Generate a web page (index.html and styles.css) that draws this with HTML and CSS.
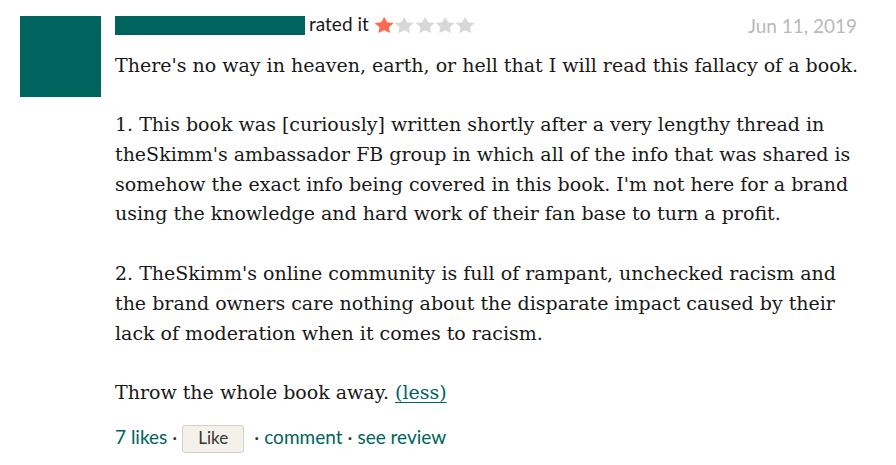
FILE: index.html
```html
<!DOCTYPE html>
<html lang="en">
<head>
<meta charset="utf-8">
<title>Review</title>
<link rel="stylesheet" href="styles.css">
</head>
<body>
<div class="review">
  <div class="avatar"></div>
  <div class="main">
    <div class="header">
      <span class="name-bar"></span>
      <span class="rated">rated it</span>
      <span class="stars">
        <svg class="star on" viewBox="0 0 20 16"><path d="M10 0L12.94 5.26L19.51 6.11L14.76 10.21L15.88 16L10 13.26L4.12 16L5.24 10.21L0.49 6.11L7.06 5.26Z"/></svg>
        <svg class="star" viewBox="0 0 20 16"><path d="M10 0L12.94 5.26L19.51 6.11L14.76 10.21L15.88 16L10 13.26L4.12 16L5.24 10.21L0.49 6.11L7.06 5.26Z"/></svg>
        <svg class="star" viewBox="0 0 20 16"><path d="M10 0L12.94 5.26L19.51 6.11L14.76 10.21L15.88 16L10 13.26L4.12 16L5.24 10.21L0.49 6.11L7.06 5.26Z"/></svg>
        <svg class="star" viewBox="0 0 20 16"><path d="M10 0L12.94 5.26L19.51 6.11L14.76 10.21L15.88 16L10 13.26L4.12 16L5.24 10.21L0.49 6.11L7.06 5.26Z"/></svg>
        <svg class="star" viewBox="0 0 20 16"><path d="M10 0L12.94 5.26L19.51 6.11L14.76 10.21L15.88 16L10 13.26L4.12 16L5.24 10.21L0.49 6.11L7.06 5.26Z"/></svg>
      </span>
      <span class="date">Jun 11, 2019</span>
    </div>
    <div class="text">
      <p>There's no way in heaven, earth, or hell that I will read this fallacy of a book.</p>
      <p>1. This book was [curiously] written shortly after a very lengthy thread in theSkimm's ambassador FB group in which all of the info that was shared is somehow the exact info being covered in this book. I'm not here for a brand using the knowledge and hard work of their fan base to turn a profit.</p>
      <p>2. TheSkimm's online community is full of rampant, unchecked racism and the brand owners care nothing about the disparate impact caused by their lack of moderation when it comes to racism.</p>
      <p>Throw the whole book away. <a class="less" href="#">(less)</a></p>
    </div>
    <div class="footer">
      <span class="link">7 likes</span><span class="dot">·</span>
      <button class="like">Like</button>
      <span class="dot">·</span><span class="link">comment</span><span class="dot">·</span><span class="link">see review</span>
    </div>
  </div>
</div>
</body>
</html>
```
FILE: styles.css
```css
body {
  margin: 0;
  background: #ffffff;
}

.review {
  display: flex;
  gap: 14px;
  padding: 16px 30px 0 20px;
}

.avatar {
  flex: none;
  width: 81px;
  height: 81px;
  background: #00635d;
}

.main {
  flex: 1;
  min-width: 0;
}

.header {
  display: flex;
  align-items: flex-start;
  height: 19px;
  font-family: "Lato", "Liberation Sans", sans-serif;
  font-size: 19px;
  line-height: 20px;
}

.name-bar {
  flex: none;
  width: 190px;
  height: 19px;
  background: #00635d;
}

.rated {
  margin-left: 4px;
  margin-top: -2px;
  color: #181818;
}

.stars {
  display: flex;
  margin-left: 5px;
  margin-top: 1px;
}

.star {
  width: 20.4px;
  height: 16px;
  fill: #d8d8d8;
}

.star.on {
  fill: #fc6b4f;
}

.date {
  margin-left: auto;
  margin-right: 9px;
  color: #b9b9b9;
}

.text {
  margin-top: 15.5px;
  font-family: "DejaVu Serif", "Liberation Serif", serif;
  font-size: 19px;
  line-height: 29.8px;
  color: #181818;
}

.text p {
  margin: 0 0 29.8px;
}

.text p:last-child {
  margin-bottom: 0;
}

.less {
  color: #00635d;
  text-decoration: underline;
  text-underline-offset: 3px;
}

.footer {
  display: flex;
  align-items: baseline;
  margin-top: 17px;
  font-family: "Lato", "Liberation Sans", sans-serif;
  font-size: 19px;
  color: #00635d;
}

.dot {
  margin: 0 5px;
  color: #333333;
}

.footer .dot:first-of-type {
  margin-right: 7px;
}

.like {
  box-sizing: border-box;
  width: 62px;
  height: 28px;
  margin: 0 5px 0 0;
  padding: 2px 0 4px;
  border: 1px solid #d6d0c4;
  border-radius: 3px;
  background: #f4f1ea;
  font-family: "Lato", "Liberation Sans", sans-serif;
  font-size: 17px;
  line-height: 20px;
  color: #333333;
  text-align: center;
}
```
